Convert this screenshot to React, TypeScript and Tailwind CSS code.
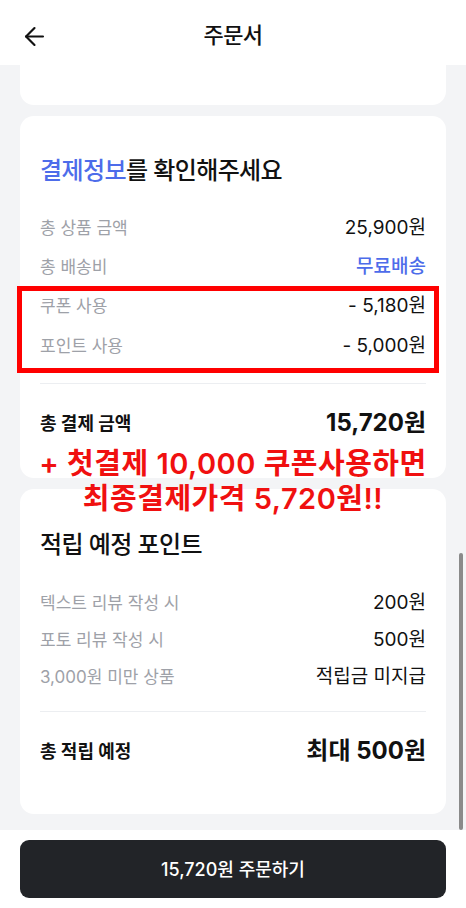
import { ArrowLeft } from 'lucide-react'

const font = { fontFamily: 'Inter, "Noto Sans CJK KR", "Noto Sans", sans-serif' }

function Row({ label, value, valueClass = 'text-[#111]', h = 'h-[39px]' }: { label: string; value: string; valueClass?: string; h?: string }) {
  return (
    <div className={`flex items-center justify-between ${h}`}>
      <span className="text-[17px] text-[#9ea1a8]">{label}</span>
      <span className={`text-[19px] ${valueClass}`}>{value}</span>
    </div>
  )
}

export default function App() {
  return (
    <div className="w-[466px] h-[908px] bg-white flex flex-col overflow-hidden text-[#111]" style={font}>
      {/* header */}
      <div className="h-[65px] shrink-0 relative flex items-center justify-center pt-[6px]">
        <ArrowLeft className="absolute left-[19px] top-[22px] w-[31px] h-[29px]" strokeWidth={1.8} />
        <span className="text-[22px] font-medium tracking-tight">주문서</span>
      </div>

      {/* scroll area */}
      <div className="relative h-[765px] shrink-0 bg-[#f3f4f6] px-[20px] flex flex-col">
        <div className="h-[40px] shrink-0 bg-white rounded-b-[14px]" />

        {/* payment card */}
        <div className="relative mt-[11px] h-[362px] shrink-0 bg-white rounded-[14px] px-[20px] pt-[39px]">
          <h2 className="text-[24px] font-medium leading-[32px] tracking-tight">
            <span className="text-[#4d6cea]">결제정보</span>를 확인해주세요
          </h2>
          <div className="mt-[22px]">
            <Row label="총 상품 금액" value="25,900원" />
            <Row label="총 배송비" value="무료배송" valueClass="text-[#4d6cea] font-medium text-[18px]" />
            <Row label="쿠폰 사용" value="- 5,180원" />
            <Row label="포인트 사용" value="- 5,000원" h="h-[41px]" />
          </div>
          <div className="mt-[16px] h-px bg-[#eceef1]" />
          <div className="flex items-center justify-between h-[78px]">
            <span className="text-[18px] font-bold">총 결제 금액</span>
            <span className="text-[24px] font-bold">15,720원</span>
          </div>
          <div className="absolute left-[-3px] top-[170px] w-[422px] h-[87px] border-[5px] border-[#ff0000]" />
        </div>

        {/* points card */}
        <div className="mt-[11px] h-[325px] shrink-0 bg-white rounded-[14px] px-[20px] pt-[40px]">
          <h2 className="text-[24px] font-medium leading-[32px] tracking-tight">적립 예정 포인트</h2>
          <div className="mt-[24px]">
            <Row label="텍스트 리뷰 작성 시" value="200원" h="h-[37px]" />
            <Row label="포토 리뷰 작성 시" value="500원" h="h-[37px]" />
            <Row label="3,000원 미만 상품" value="적립금 미지급" h="h-[37px]" />
          </div>
          <div className="mt-[15px] h-px bg-[#eceef1]" />
          <div className="flex items-center justify-between h-[78px]">
            <span className="text-[18px] font-bold">총 적립 예정</span>
            <span className="text-[24px] font-bold">최대 500원</span>
          </div>
        </div>

        {/* annotation */}
        <div className="absolute left-0 right-0 top-[381px] flex flex-col items-center text-[#f01010] text-[29px] font-semibold leading-[35px] tracking-[0.5px]">
          <span>+ 첫결제 10,000 쿠폰사용하면</span>
          <span>최종결제가격 5,720원!!</span>
        </div>

        <div className="absolute right-[3px] top-[488px] w-[4px] h-[277px] rounded-full bg-[#8a8a8a]" />
      </div>

      {/* footer */}
      <div className="px-[20px] pt-[10px]">
        <button type="button" className="w-full h-[58px] rounded-[9px] bg-[#222428] text-white text-[18px] font-medium">
          15,720원 주문하기
        </button>
      </div>
    </div>
  )
}
